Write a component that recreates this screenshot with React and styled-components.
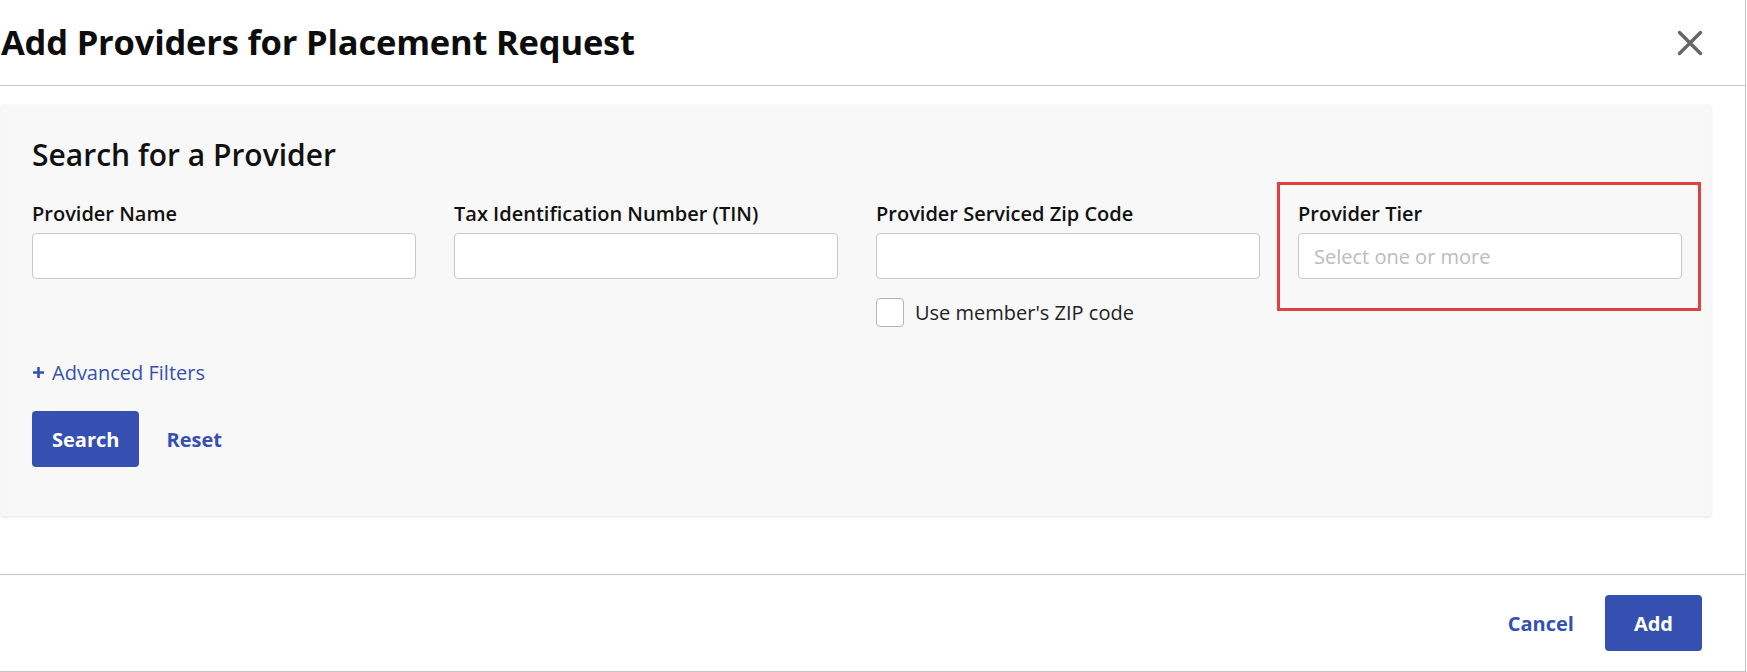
import React from 'react';
import styled, { createGlobalStyle } from 'styled-components';

const GlobalStyle = createGlobalStyle`
  html, body {
    margin: 0;
    padding: 0;
    background: #fff;
  }
  body {
    font-family: "Open Sans", "Noto Sans", Arial, sans-serif;
    color: #111;
  }
`;

const Dialog = styled.div`
  width: 1746px;
  height: 672px;
  box-sizing: border-box;
  border-right: 1px solid #c6c6c6;
  border-bottom: 1px solid #c6c6c6;
  display: flex;
  flex-direction: column;
  background: #fff;
`;

const Header = styled.header`
  height: 86px;
  box-sizing: border-box;
  border-bottom: 1px solid #c6c6c6;
  display: flex;
  align-items: center;
  justify-content: space-between;
  padding: 0 41px 0 1px;
`;

const Title = styled.h1`
  margin: 0;
  font-size: 34.5px;
  font-weight: 700;
  line-height: 1;
  letter-spacing: -0.2px;
  color: #0d0d0d;
`;

const CloseButton = styled.button`
  border: 0;
  background: none;
  padding: 0;
  width: 28px;
  height: 28px;
  display: flex;
  align-items: center;
  justify-content: center;
  cursor: pointer;
`;

const Body = styled.main`
  flex: 1;
  padding: 19px 34px 0 1px;
`;

const Panel = styled.section`
  background: #f8f8f8;
  box-shadow: 0 1px 3px rgba(0, 0, 0, 0.12);
  height: 411px;
  box-sizing: border-box;
  padding: 31px 30px 0 31px;
`;

const PanelHeading = styled.h2`
  margin: 0 0 27px;
  font-size: 30px;
  font-weight: 600;
  line-height: 38px;
  color: #111;
`;

const FieldGrid = styled.div`
  display: grid;
  grid-template-columns: repeat(4, 384px);
  column-gap: 38px;
  align-items: start;
`;

const Field = styled.div`
  position: relative;
  display: flex;
  flex-direction: column;
`;

const Label = styled.label`
  font-size: 20px;
  font-weight: 600;
  line-height: 26px;
  color: #111;
  margin-bottom: 6px;
`;

const TextInput = styled.input`
  box-sizing: border-box;
  width: 100%;
  height: 46px;
  border: 1px solid #c8c8c8;
  border-radius: 4px;
  background: #fff;
  padding: 0 15px;
  font-family: inherit;
  font-size: 20px;
  color: #222;
  outline: none;
  &::placeholder {
    color: #bcbcbc;
  }
`;

const CheckRow = styled.label`
  display: flex;
  align-items: center;
  gap: 11px;
  margin-top: 19px;
  font-size: 20px;
  line-height: 29px;
  color: #222;
  cursor: pointer;
`;

const CheckBox = styled.span`
  box-sizing: border-box;
  width: 28px;
  height: 29px;
  border: 1px solid #b5b5b5;
  border-radius: 4px;
  background: #fff;
`;

const Highlight = styled.div`
  position: absolute;
  left: -21px;
  right: -19px;
  top: -19px;
  height: 129px;
  border: 3px solid #e0403f;
  box-sizing: border-box;
  pointer-events: none;
`;

const LinkButton = styled.button`
  border: 0;
  background: none;
  padding: 0;
  font-family: inherit;
  font-size: 20px;
  font-weight: ${p => (p.bold ? 700 : 400)};
  color: #3650b2;
  cursor: pointer;
  display: inline-flex;
  align-items: center;
  gap: 7px;
`;

const FilterRow = styled.div`
  margin-top: 30px;
  height: 30px;
  display: flex;
  align-items: center;
`;

const ActionRow = styled.div`
  display: flex;
  align-items: center;
  gap: ${p => p.gap || 27}px;
`;

const SearchRow = styled(ActionRow)`
  margin-top: 24px;
`;

const PrimaryButton = styled.button`
  border: 0;
  border-radius: 4px;
  background: #3650b2;
  color: #fff;
  height: 56px;
  padding: 0 ${p => p.pad || 19}px;
  font-family: inherit;
  font-size: 20px;
  font-weight: 700;
  cursor: pointer;
`;

const Footer = styled.footer`
  height: 97px;
  box-sizing: border-box;
  border-top: 1px solid #c6c6c6;
  display: flex;
  justify-content: flex-end;
  align-items: center;
  padding: 0 43px 0 0;
`;

const PlusIcon = () => (
  <svg width="13" height="13" viewBox="0 0 13 13" aria-hidden="true">
    <path d="M6.5 1v11M1 6.5h11" stroke="#3650b2" strokeWidth="2.6" />
  </svg>
);

const CloseIcon = () => (
  <svg width="26" height="26" viewBox="0 0 26 26" aria-hidden="true">
    <path d="M2.5 2.5L23.5 23.5M23.5 2.5L2.5 23.5" stroke="#666" strokeWidth="3.4" strokeLinecap="round" />
  </svg>
);

export default function App() {
  return (
    <>
      <GlobalStyle />
      <Dialog>
        <Header>
          <Title>Add Providers for Placement Request</Title>
          <CloseButton aria-label="Close">
            <CloseIcon />
          </CloseButton>
        </Header>
        <Body>
          <Panel>
            <PanelHeading>Search for a Provider</PanelHeading>
            <FieldGrid>
              <Field>
                <Label>Provider Name</Label>
                <TextInput />
              </Field>
              <Field>
                <Label>Tax Identification Number (TIN)</Label>
                <TextInput />
              </Field>
              <Field>
                <Label>Provider Serviced Zip Code</Label>
                <TextInput />
                <CheckRow>
                  <CheckBox />
                  Use member's ZIP code
                </CheckRow>
              </Field>
              <Field>
                <Highlight />
                <Label>Provider Tier</Label>
                <TextInput placeholder="Select one or more" />
              </Field>
            </FieldGrid>
            <FilterRow>
              <LinkButton>
                <PlusIcon />
                Advanced Filters
              </LinkButton>
            </FilterRow>
            <SearchRow>
              <PrimaryButton pad={20}>Search</PrimaryButton>
              <LinkButton bold>Reset</LinkButton>
            </SearchRow>
          </Panel>
        </Body>
        <Footer>
          <ActionRow gap={31}>
            <LinkButton bold>Cancel</LinkButton>
            <PrimaryButton pad={29}>Add</PrimaryButton>
          </ActionRow>
        </Footer>
      </Dialog>
    </>
  );
}
